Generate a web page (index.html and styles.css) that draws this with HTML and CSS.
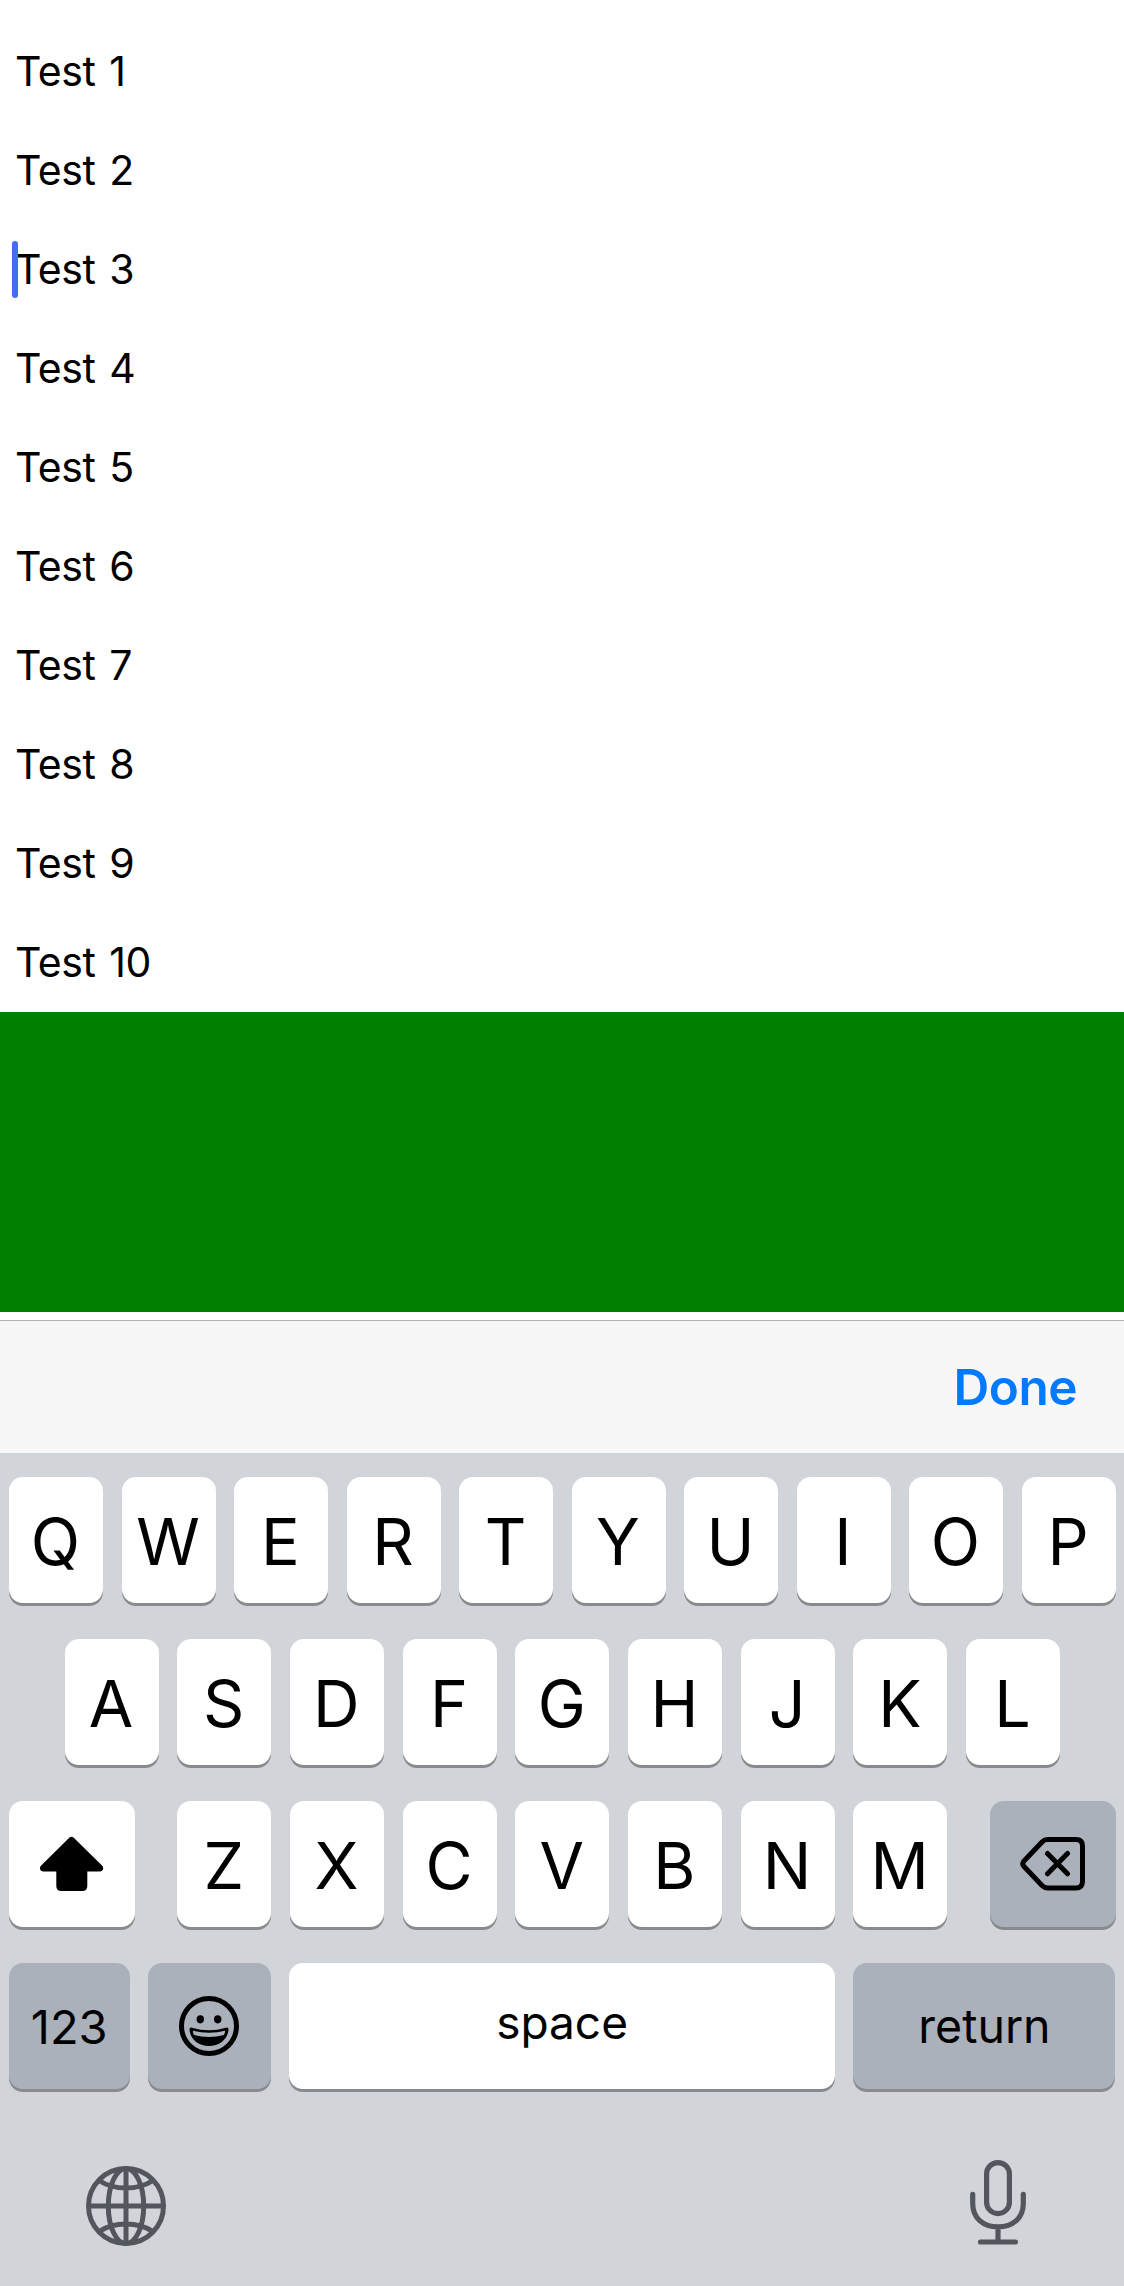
FILE: index.html
```html
<!DOCTYPE html>
<html lang="en">
<head>
<meta charset="utf-8">
<title>Test list</title>
<link rel="stylesheet" href="styles.css">
</head>
<body>
<main class="screen">
  <ul class="list">
    <li class="item">Test 1</li>
    <li class="item">Test 2</li>
    <li class="item item-focused">Test 3</li>
    <li class="item">Test 4</li>
    <li class="item">Test 5</li>
    <li class="item">Test 6</li>
    <li class="item">Test 7</li>
    <li class="item">Test 8</li>
    <li class="item">Test 9</li>
    <li class="item">Test 10</li>
  </ul>
  <div class="panel"></div>
  <div class="toolbar"><span class="done">Done</span></div>
  <section class="keyboard">
    <div class="row">
      <span class="key">Q</span><span class="key">W</span><span class="key">E</span><span class="key">R</span><span class="key">T</span><span class="key">Y</span><span class="key">U</span><span class="key">I</span><span class="key">O</span><span class="key">P</span>
    </div>
    <div class="row row-middle">
      <span class="key">A</span><span class="key">S</span><span class="key">D</span><span class="key">F</span><span class="key">G</span><span class="key">H</span><span class="key">J</span><span class="key">K</span><span class="key">L</span>
    </div>
    <div class="row">
      <span class="key key-wide">
        <svg width="64" height="56" viewBox="0 0 64 56"><path d="M29 1.9Q31.500-.4 34 1.900L62 29.500C64.500 32 63 35.500 59.500 35.500H47.300V50Q47.300 55 42.300 55H21.300Q16.300 55 16.300 50V35.500H3.500C0 35.500-1.300 32 1.200 29.500Z"/></svg>
      </span>
      <span class="letters">
        <span class="key">Z</span><span class="key">X</span><span class="key">C</span><span class="key">V</span><span class="key">B</span><span class="key">N</span><span class="key">M</span>
      </span>
      <span class="key key-wide key-dark">
        <svg width="66" height="56" viewBox="0 0 66 56" fill="none" stroke="#000" stroke-width="5" stroke-linecap="round" stroke-linejoin="round"><path d="M27.500 3.500H56Q62.500 3.500 62.500 10V45.500Q62.500 52 56 52H27.500Q24.500 52 22.300 49.800L4 30.500Q1.500 27.800 4 25L22.300 5.700Q24.500 3.500 27.500 3.500ZM27.500 17.500 47.500 37.800M47.500 17.500 27.500 37.800"/></svg>
      </span>
    </div>
    <div class="row">
      <span class="key key-dark key-num">123</span>
      <span class="key key-dark key-emoji">
        <svg width="62" height="62" viewBox="0 0 62 62"><circle cx="31" cy="31" r="27.500" fill="none" stroke="#000" stroke-width="5"/><ellipse cx="22.300" cy="24.300" rx="3.700" ry="4.100"/><ellipse cx="39.700" cy="24.300" rx="3.700" ry="4.100"/><path fill-rule="evenodd" d="M14 32.700Q31 37.800 48 32.700Q50.800 32 50.500 35C49.500 44.500 41.500 51 31 51S12.500 44.500 11.500 35Q11.200 32 14 32.700ZM14.800 35.700Q15.100 38 16 39.900Q31 44.200 46 39.900Q46.900 38 47.200 35.700Q31 39.800 14.800 35.700Z"/></svg>
      </span>
      <span class="key key-space"><span class="space-label">space</span></span>
      <span class="key key-dark key-return">return</span>
    </div>
    <div class="footer">
      <svg class="globe" width="82" height="82" viewBox="0 0 82 82" fill="none" stroke="#53575d" stroke-width="5"><circle cx="41" cy="41" r="37.500"/><path d="M41 3V79M3 41H79M14 15.500Q25.500 23 41 23T68 15.500M14 66.500Q25.500 59 41 59T68 66.500"/><ellipse cx="41" cy="41" rx="17.700" ry="37.500"/></svg>
      <svg width="58" height="88" viewBox="0 0 58 88" fill="none" stroke="#53575d" stroke-width="5.200" stroke-linecap="round"><rect x="17.600" y="4.600" width="22.800" height="51" rx="11.400"/><path d="M3.700 36.300V45.500C3.700 60 14 68.900 29 68.900S54.300 60 54.300 45.500V36.300M29 69V84M11.500 84H46.500"/></svg>
    </div>
  </section>
</main>
</body>
</html>
```

FILE: styles.css
```css
* { box-sizing: border-box; }
body {
  margin: 0;
  background: #fff;
  color: #000;
  font-family: Inter, "Liberation Sans", sans-serif;
}
svg { display: block; flex: none; }
.screen { width: 1124px; height: 2286px; overflow: hidden; }
.list {
  height: 1012px;
  margin: 0;
  padding: 22px 0 0 15px;
  list-style: none;
}
.item {
  height: 99px;
  font-size: 41px;
  line-height: 99px;
  letter-spacing: -.4px;
  word-spacing: 2.500px;
}
.item-focused { position: relative; }
.item-focused::before {
  content: "";
  position: absolute;
  left: -3px;
  top: 21px;
  width: 6px;
  height: 57px;
  border-radius: 3px;
  background: #456df1;
}
.panel { height: 300px; background: #008000; }
.toolbar {
  display: flex;
  justify-content: flex-end;
  align-items: center;
  height: 133px;
  margin-top: 8px;
  padding-right: 47px;
  border-top: 1px solid #b2b2b4;
  background: #f7f7f7;
}
.done { color: #007aff; font-size: 49.500px; font-weight: 600; letter-spacing: -.5px; }
.keyboard {
  display: flex;
  flex-direction: column;
  gap: 36px;
  height: 833px;
  padding: 24px 8.500px 0 9px;
  background: #d1d4d9;
}
.row { display: flex; justify-content: space-between; height: 126px; }
.row-middle { padding: 0 55.500px; }
.letters { display: flex; justify-content: space-between; width: 770px; }
.key {
  display: flex;
  justify-content: center;
  align-items: center;
  width: 94px;
  height: 126px;
  padding: 3px 1px 0 0;
  border-radius: 14px;
  background: #fff;
  box-shadow: 0 3px 0 #898a8d;
  font-size: 64.500px;
}
.key-wide { width: 126px; padding: 0; }
.key-dark { background: #abb1bb; }
.key-num { width: 120.500px; padding: 0; font-size: 47px; }
.key-emoji { width: 123px; padding: 0; }
.key-space { width: 546.500px; padding: 0; font-size: 46px; }
.space-label { margin-top: -8px; }
.key-return { width: 262px; padding: 0; font-size: 46.500px; }
.footer {
  display: flex;
  justify-content: space-between;
  align-items: flex-start;
  padding: 33px 88.500px 0 76px;
}
.globe { margin-top: 7px; }
```
